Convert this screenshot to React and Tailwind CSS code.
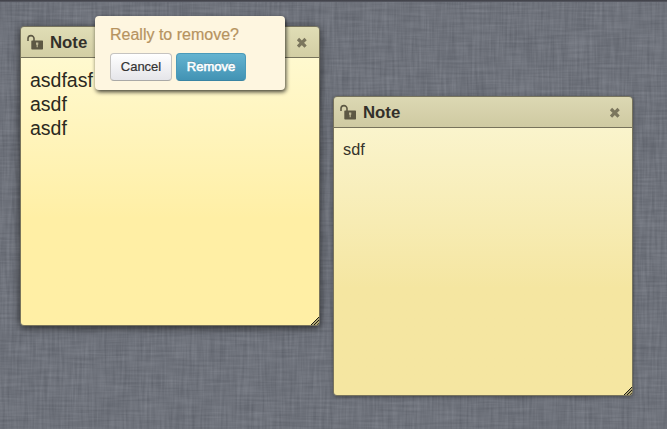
import React from 'react';

const HELV = 'font-["Liberation_Sans",Arial,sans-serif]';

function Linen() {
  return (
    <svg className="absolute inset-0 h-full w-full" aria-hidden="true">
      <filter id="warp" x="0" y="0" width="100%" height="100%" colorInterpolationFilters="sRGB">
        <feTurbulence type="fractalNoise" baseFrequency="0.03 0.4" numOctaves="2" seed="4" />
        <feColorMatrix values="0.18 0 0 0 0.345  0.18 0 0 0 0.36  0.18 0 0 0 0.395  0 0 0 0 1" />
      </filter>
      <filter id="weft" x="0" y="0" width="100%" height="100%" colorInterpolationFilters="sRGB">
        <feTurbulence type="fractalNoise" baseFrequency="0.4 0.03" numOctaves="2" seed="9" />
        <feColorMatrix values="0.18 0 0 0 0.345  0.18 0 0 0 0.36  0.18 0 0 0 0.395  0 0 0 0 1" />
      </filter>
      <rect width="100%" height="100%" filter="url(#warp)" />
      <rect width="100%" height="100%" filter="url(#weft)" opacity="0.5" />
    </svg>
  );
}

function LockOpen() {
  return (
    <svg className="h-[16px] w-[17px] shrink-0" viewBox="0 0 17 16">
      <path d="M1 7V4.600a3 3 0 0 1 6 0V7" fill="none" stroke="#5d5844" strokeWidth="1.6" />
      <path d="M5 6.400h10.300a.7.7 0 0 1 .7.7v7.700a.7.7 0 0 1-.7.7H5a.7.7 0 0 1-.7-.7V7.100a.7.7 0 0 1 .7-.7z" fill="#5d5844" />
      <path d="M9 8.600h2.300v2l-.5.5v2.200H9.600v-2.200L9 10.600z" fill="#bdb795" />
    </svg>
  );
}

function CloseMark() {
  return (
    <svg className="relative top-[1px] h-[12px] w-[12px] shrink-0" viewBox="0 0 12 12">
      <path d="M2 2l7.600 7.600M9.600 2L2 9.600" stroke="#7b765d" strokeWidth="3.2" fill="none" />
    </svg>
  );
}

function Grip() {
  return (
    <svg className="absolute right-0 bottom-0 h-[8px] w-[8px]" viewBox="0 0 8 8" shapeRendering="crispEdges">
      <path d="M0 8L8 0V8z" fill="#b1a775" />
      <path d="M0 8L8 0M3 8L8 3M6 8L8 6" stroke="#1d1b14" strokeWidth="1" />
    </svg>
  );
}

function Note({ frame, header, body, text, lines }) {
  return (
    <section className={`absolute flex h-[300px] w-[300px] flex-col overflow-hidden rounded-[4px] border border-[#77735c] ${frame}`}>
      <header className={`flex h-[31px] shrink-0 items-center border-b border-[#77735c] pr-[11px] pl-[6px] ${header}`}>
        <LockOpen />
        <h2 className="ml-[6px] flex-1 pt-[2px] text-[16.800px] leading-[20px] font-bold text-[#33302a]">Note</h2>
        <CloseMark />
      </header>
      <div className={`flex-1 px-[9px] ${body} ${text}`}>
        {lines.map((line, i) => (
          <p key={i}>{line}</p>
        ))}
      </div>
      <Grip />
    </section>
  );
}

export default function App() {
  return (
    <main className={`relative h-[429px] w-[667px] overflow-hidden bg-[#6b6e78] ${HELV}`}>
      <Linen />
      <div className="absolute inset-x-0 top-0 h-[2px] bg-gradient-to-b from-[#3c3d44] to-[#5a5c65]" />
      <Note
        frame="left-[20px] top-[26px] shadow-[0_2px_9px_rgba(0,0,0,0.65)]"
        header="bg-gradient-to-b from-[#e0ddb6] to-[#d3cea4]"
        body="bg-gradient-to-b from-[#fff9cf] from-0% to-[#ffefa5] to-60% pt-[10px]"
        text="text-[19.500px] leading-[24px] text-[#2b2921]"
        lines={['asdfasf', 'asdf', 'asdf']}
      />
      <Note
        frame="left-[333px] top-[96px] shadow-[0_1px_4px_rgba(0,0,0,0.4)]"
        header="bg-gradient-to-b from-[#dcd8b3] to-[#cfcaa2]"
        body="bg-gradient-to-b from-[#faf4cc] from-0% to-[#f5e6a1] to-60% pt-[10px]"
        text="text-[16.300px] leading-[22px] text-[#37342b]"
        lines={['sdf']}
      />
      <div className="absolute top-[16px] left-[95px] h-[74px] w-[190px] rounded-[4px] bg-[#fef6e0] px-[15px] pt-[9px] shadow-[1px_2px_4px_rgba(0,0,0,0.75)]">
        <p className="text-[16px] leading-[20px] whitespace-nowrap text-[#b6935f] [-webkit-text-stroke:0.2px_#b6935f]">Really to remove?</p>
        <div className="mt-[8px] flex gap-[4px] text-[13px] leading-[26px]">
          <button className="h-[28px] w-[62px] rounded-[4px] border border-[#c5c3c0] border-b-[#aaa9a7] bg-gradient-to-b from-white to-[#e5e5e9] text-[#333] [-webkit-text-stroke:0.2px_#333]">
            Cancel
          </button>
          <button className="h-[28px] w-[70px] rounded-[4px] border border-[#4a9ab9] border-b-[#3984a3] bg-gradient-to-b from-[#64b3d0] to-[#4293b4] text-white [-webkit-text-stroke:0.6px_white] [text-shadow:0_-1px_0_rgba(0,0,0,0.25)]">
            Remove
          </button>
        </div>
      </div>
    </main>
  );
}
